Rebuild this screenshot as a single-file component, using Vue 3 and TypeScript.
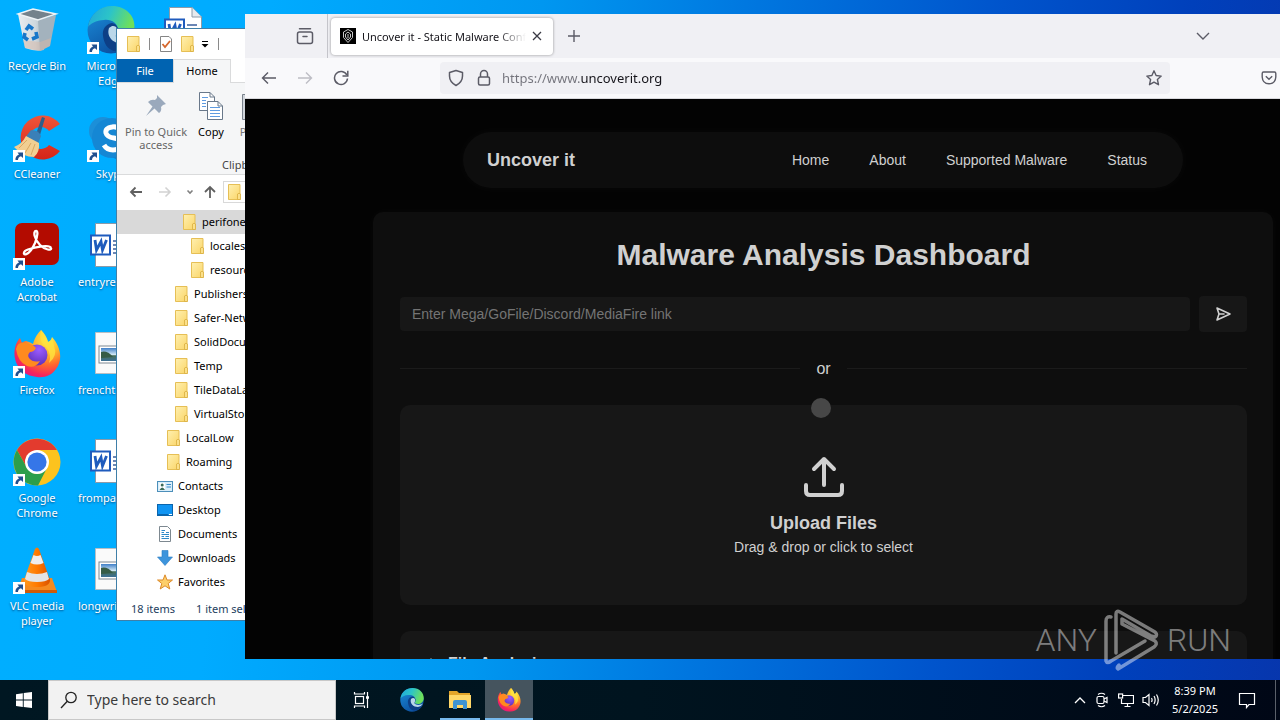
<script setup lang="ts">
import { ref } from 'vue'

interface Shortcut {
  label: string
  icon: string
  linked?: boolean
  cut?: boolean
}

interface TreeNode {
  label: string
  icon: string
  level: number
  selected?: boolean
}

const columns: Shortcut[][] = [
  [
    { label: 'Recycle Bin', icon: 'bin' },
    { label: 'CCleaner', icon: 'ccleaner', linked: true },
    { label: 'Adobe Acrobat', icon: 'acrobat', linked: true },
    { label: 'Firefox', icon: 'firefox', linked: true },
    { label: 'Google Chrome', icon: 'chrome', linked: true },
    { label: 'VLC media player', icon: 'vlc', linked: true },
  ],
  [
    { label: 'Microsoft Edge', icon: 'edge', linked: true },
    { label: 'Skype', icon: 'skype', linked: true },
    { label: 'entryre', icon: 'word', cut: true },
    { label: 'frencht', icon: 'photo', cut: true },
    { label: 'frompa', icon: 'word', cut: true },
    { label: 'longwri', icon: 'photo', cut: true },
  ],
  [{ label: '', icon: 'word' }],
]

const tree: TreeNode[] = [
  { label: 'perifone', icon: 'folder', level: 3, selected: true },
  { label: 'locales', icon: 'folder', level: 4 },
  { label: 'resources', icon: 'folder', level: 4 },
  { label: 'Publishers', icon: 'folder', level: 2 },
  { label: 'Safer-Networking', icon: 'folder', level: 2 },
  { label: 'SolidDocuments', icon: 'folder', level: 2 },
  { label: 'Temp', icon: 'folder', level: 2 },
  { label: 'TileDataLayer', icon: 'folder', level: 2 },
  { label: 'VirtualStore', icon: 'folder', level: 2 },
  { label: 'LocalLow', icon: 'folder', level: 1 },
  { label: 'Roaming', icon: 'folder', level: 1 },
  { label: 'Contacts', icon: 'contacts', level: 0 },
  { label: 'Desktop', icon: 'desktop', level: 0 },
  { label: 'Documents', icon: 'documents', level: 0 },
  { label: 'Downloads', icon: 'downloads', level: 0 },
  { label: 'Favorites', icon: 'favorites', level: 0 },
]

const links = ['Home', 'About', 'Supported Malware', 'Status']
const address = ref('https://www.uncoverit.org')
const link = ref('')
const query = ref('')
</script>

<template>
  <div class="screen">
    <svg class="sprite" width="0" height="0" aria-hidden="true">
      <defs>
        <linearGradient id="gEdgeA" x1="0" y1="0" x2="1" y2="0.3">
          <stop offset="0" stop-color="#1fa5dc" /><stop offset="0.5" stop-color="#2cc4c8" /><stop offset="1" stop-color="#6fe05a" />
        </linearGradient>
        <linearGradient id="gEdgeB" x1="0" y1="0" x2="0.6" y2="1">
          <stop offset="0" stop-color="#1b8fdc" /><stop offset="1" stop-color="#0c4f9e" />
        </linearGradient>
        <radialGradient id="gFox" cx="0.72" cy="0.2" r="0.9">
          <stop offset="0" stop-color="#fff04a" /><stop offset="0.35" stop-color="#ffb42a" /><stop offset="0.6" stop-color="#ff6a2c" /><stop offset="0.85" stop-color="#f5265c" /><stop offset="1" stop-color="#e0158a" />
        </radialGradient>
        <radialGradient id="gGlobe" cx="0.6" cy="0.25" r="0.8">
          <stop offset="0" stop-color="#9c5cff" /><stop offset="1" stop-color="#5a2fb8" />
        </radialGradient>
        <linearGradient id="gFolder" x1="0" y1="0" x2="1" y2="1">
          <stop offset="0" stop-color="#fff0b0" /><stop offset="1" stop-color="#fad568" />
        </linearGradient>
        <linearGradient id="gCone" x1="0" y1="0" x2="1" y2="0">
          <stop offset="0" stop-color="#ff9a1e" /><stop offset="0.5" stop-color="#ff7a00" /><stop offset="1" stop-color="#d95200" />
        </linearGradient>
        <linearGradient id="gCc" x1="0" y1="0" x2="0" y2="1">
          <stop offset="0" stop-color="#f0553a" /><stop offset="1" stop-color="#d42418" />
        </linearGradient>
        <linearGradient id="gBin" x1="0" y1="0" x2="1" y2="0">
          <stop offset="0" stop-color="#e9eef1" /><stop offset="0.6" stop-color="#cfd8de" /><stop offset="1" stop-color="#9fadb8" />
        </linearGradient>
        <linearGradient id="gSky" x1="0" y1="0" x2="0" y2="1">
          <stop offset="0" stop-color="#3f7fc8" /><stop offset="0.5" stop-color="#cfe6f4" /><stop offset="0.6" stop-color="#48705a" /><stop offset="1" stop-color="#3a6f96" />
        </linearGradient>
      </defs>

      <symbol id="bin" viewBox="0 0 48 48">
        <path d="M5 8 34 13 31 44Q23 46 12 42Z" fill="url(#gBin)" />
        <path d="M25 14 43 9 37 40 27 45Z" fill="#a3b2bd" />
        <path d="M5 8 20 3 43 8 25 14Z" fill="#74828c" stroke="#eef3f6" stroke-width="1.500" />
        <path d="M10 34 27 36 38 32 37 40 27 45 12 42Z" fill="#d8b8a6" opacity="0.5" />
        <g fill="none" stroke="#1877c9" stroke-width="3.600">
          <path d="M13 24 16 20 20 23" /><path d="M23 26 24 31 19 33" /><path d="M15 34 11 31 12 27" />
        </g>
      </symbol>

      <symbol id="ccleaner" viewBox="0 0 48 48">
        <path d="M47 10A22 22 0 1 0 47 37L36 31A11 11 0 1 1 36 17Z" fill="url(#gCc)" />
        <path d="M29 3 32 4 27 21 23 20Z" fill="#2d5f8b" />
        <path d="M18 16Q26 16 28 22L25 30 12 24Z" fill="#3a80b8" />
        <path d="M13 22 26 29Q27 38 21 43Q10 43 1 33Q9 30 13 22Z" fill="#f2cf92" />
        <path d="M14 26 6 34M18 29 12 39M22 30 18 41" stroke="#d9a962" stroke-width="1" />
      </symbol>

      <symbol id="acrobat" viewBox="0 0 48 48">
        <rect x="2" y="1" width="44" height="42" rx="7" fill="#b30b00" />
        <path d="M12 29C8 34 16 35 22 21C25 13 25 9 23 9C20 9 21 17 27 23C32 28 39 29 38 26C37 22 22 25 15 27.500C13 28.300 12.500 28.500 12 29Z" fill="none" stroke="#fff" stroke-width="2.300" />
      </symbol>

      <symbol id="firefox" viewBox="0 0 48 48">
        <path d="M28 0C32 4 34 9 35 12C38 11 39 9 39 7C48 17 50 30 43 39C39 45 32 48 24 47C8 46-1 32 2 18C3 13 5 10 7 8L9 13Q11 11 13 11Q17 12 20 14C22 7 25 3 28 0Z" fill="url(#gFox)" />
        <circle cx="24" cy="25" r="10.500" fill="url(#gGlobe)" />
        <path d="M3 19Q5 11 13 13Q20 14 23 18Q21 22 17 22Q14 25 16 28Q20 33 27 31Q22 39 14 36Q5 32 3 19Z" fill="#ff8a1f" />
        <path d="M28 0Q25 11 33 17Q39 24 36 33Q45 26 41 16L39 7Q38 11 35 12Q34 6 28 0Z" fill="#ffe23f" opacity="0.8" />
      </symbol>

      <symbol id="chrome" viewBox="0 0 48 48">
        <circle cx="24" cy="24" r="23.500" fill="#fcc31e" />
        <path d="M4 12A23.500 23.500 0 0 1 44 12H24V24L14 30Z" fill="#e33b2e" />
        <path d="M4 12A23.500 23.500 0 0 0 25 47.500L34 30Q24 42 14 30Z" fill="#2c9e4b" />
        <circle cx="24" cy="24" r="12" fill="#fff" /><circle cx="24" cy="24" r="9.600" fill="#3576e8" />
      </symbol>

      <symbol id="vlc" viewBox="0 0 48 48">
        <path d="M9 32H39L44 46H4Z" fill="#f58a1f" /><path d="M4 44H44L44 47H4Z" fill="#cf5b08" />
        <path d="M22 3Q24 0 26 3L37 34Q37 41 24 41Q11 41 11 34Z" fill="url(#gCone)" />
        <path d="M20.500 9Q24 11 27.500 9L30.500 17Q24 20 17.500 17Z" fill="#eeeeee" />
        <path d="M14 26Q24 30 34 26L36 33Q33 36 24 36Q15 36 12 33Z" fill="#e4e4e4" />
      </symbol>

      <symbol id="edge" viewBox="0 0 48 48">
        <circle cx="24" cy="24" r="23.500" fill="url(#gEdgeB)" />
        <path d="M1 21C3 8 13 0 25 0C39 0 48 10 47.500 21C47 30 38 34 31 31C28 30 31 28 31 24C31 17 24 13 17 14C9 14 3 18 1 21Z" fill="url(#gEdgeA)" />
        <path d="M16 30C15 23 19 18 25 17C29 18 31 21 31 24C31 28 28 29 29 31C33 35 40 35 45 33C41 42 33 46 27 45C20 43 17 37 16 30Z" fill="#0d3f86" />
        <path d="M22 22C27 17 32 22 30 27C28 30 29 31 30 32C36 35 42 34 46 31Q43 37 36 38C27 38 19 31 22 22Z" fill="#d9f2fa" opacity="0.85" />
      </symbol>

      <symbol id="skype" viewBox="0 0 48 48">
        <circle cx="16" cy="17" r="14" fill="#1c8fd8" /><circle cx="32" cy="31" r="14" fill="#0f6dbb" /><circle cx="25" cy="24" r="20" fill="#1587d4" />
        <path d="M34 17Q31 12 25 13Q18 14 19 19Q20 23 27 24Q34 25 34 30Q33 36 26 36Q20 36 17 31" fill="none" stroke="#fff" stroke-width="5" />
      </symbol>

      <symbol id="word" viewBox="0 0 48 48">
        <path d="M8.500 1.500H31L40.500 11V44.500H8.500Z" fill="#fff" stroke="#8c9aa8" />
        <path d="M31 1.500V11H40.500" fill="#e6eaee" stroke="#8c9aa8" />
        <path d="M26 19H36M26 23H36M26 27H36M26 31H36" stroke="#3b5f9d" stroke-width="1.300" />
        <rect x="3" y="12.500" width="21" height="21" fill="#1f5bbd" /><rect x="5" y="14.500" width="17" height="17" fill="#fff" />
        <path d="M8 18 9.500 28 14 19.500 15.500 28 19.500 18" fill="none" stroke="#1f5bbd" stroke-width="2.800" />
      </symbol>

      <symbol id="photo" viewBox="0 0 48 48">
        <path d="M8.500 2.500H40.500V43.500H8.500Z" fill="#fafafa" stroke="#b8bec4" />
        <rect x="12" y="16" width="25" height="17" fill="#fff" stroke="#7c8791" /><rect x="14" y="18" width="21" height="13" fill="url(#gSky)" />
        <path d="M14 22Q20 20 26 27L14 28Z" fill="#365c46" />
      </symbol>

      <symbol id="arrow" viewBox="0 0 12 12">
        <rect width="12" height="12" fill="#fff" /><path d="M2.500 10Q2 6 6 4.500L4.500 2.500H10V8L8 6.200Q5 7 5 10Z" fill="#21508f" />
      </symbol>

      <symbol id="folder" viewBox="0 0 16 16">
        <path d="M2.500 0.500H14V15.500H2.500Z" fill="url(#gFolder)" stroke="#e6bf55" />
        <path d="M11.500 15.500V10Q13 8.500 14.500 10V15.500Z" fill="#fbe08a" stroke="#d9ae3f" stroke-width="0.800" />
      </symbol>
      <symbol id="contacts" viewBox="0 0 16 16">
        <rect x="0.500" y="3.500" width="15" height="10" fill="#d9eefa" stroke="#4c8fba" />
        <rect x="2.500" y="5" width="5.500" height="7" fill="#fff" /><circle cx="5.200" cy="7" r="1.500" fill="#3c6b58" /><path d="M2.500 12Q5.200 7 8 12Z" fill="#3c6b58" />
        <path d="M9.500 6.500H14M9.500 9H14" stroke="#3a8ac7" />
      </symbol>
      <symbol id="desktop" viewBox="0 0 16 16">
        <rect x="0.500" y="2.500" width="15" height="11" fill="#1094f2" stroke="#0a65ad" /><path d="M1 12.500H11" stroke="#0a65ad" /><path d="M12 12.500H15" stroke="#fff" />
      </symbol>
      <symbol id="documents" viewBox="0 0 16 16">
        <path d="M2.500 0.500H10.500L13.500 3.500V15.500H2.500Z" fill="#fff" stroke="#7d8890" />
        <path d="M4.500 4.500H8M9 6.500H12M4.500 8.500H12M4.500 10.500H7M8.500 10.500H12M4.500 12.500H12M4.500 6.500H7" stroke="#2e8bc9" />
      </symbol>
      <symbol id="downloads" viewBox="0 0 16 16">
        <path d="M5 0.500H11V7H15.500L8 15.500 0.500 7H5Z" fill="#3d94dc" stroke="#2a7cc2" stroke-width="0.600" />
      </symbol>
      <symbol id="favorites" viewBox="0 0 16 16">
        <path d="M8 0.800 10 6H15.500L11.200 9.500 12.800 15 8 11.800 3.200 15 4.800 9.500 0.500 6H6Z" fill="#fdcf6a" stroke="#dc8a2a" />
      </symbol>
    </svg>

    <main class="desktop">
      <div class="shortcuts">
        <div v-for="(column, c) in columns" :key="c" class="column">
          <div v-for="item in column" :key="item.icon + item.label" class="shortcut">
            <div class="picture">
              <svg width="48" height="48" aria-hidden="true"><use :href="'#' + item.icon" /></svg>
              <svg v-if="item.linked" class="badge" width="12" height="12" aria-hidden="true"><use href="#arrow" /></svg>
            </div>
            <span class="caption" :class="{ cut: item.cut }">{{ item.label }}</span>
          </div>
        </div>
      </div>

      <section class="explorer" aria-label="File Explorer">
        <div class="quick">
          <svg width="16" height="16"><use href="#folder" /></svg>
          <i class="bar"></i>
          <svg width="16" height="16" viewBox="0 0 16 16"><path d="M2.500 0.500H11L13.500 3V15.500H2.500Z" fill="#fff" stroke="#858585" /><path d="M4.500 8 7 11 12 5" fill="none" stroke="#d5672d" stroke-width="1.800" /></svg>
          <svg width="16" height="16"><use href="#folder" /></svg>
          <svg class="more" width="8" height="8" viewBox="0 0 8 8"><path d="M1 1.500H7" stroke="#000" /><path d="M0.500 4H7.500L4 7.500Z" /></svg>
          <i class="bar"></i>
        </div>
        <div class="tabs">
          <button class="file">File</button>
          <button class="home">Home</button>
        </div>
        <div class="ribbon">
          <div class="tools">
            <button class="tool pin">
              <svg width="28" height="30" viewBox="0 0 28 30"><path d="M15 4 24 13 21 14 19 16Q20 20 17 22L12.500 17.500 4 25 10.500 15.500 6 11Q9 8 13 9L15 7Z" fill="#9aa9bc" /></svg>
              <span>Pin to Quick access</span>
            </button>
            <button class="tool copy">
              <svg width="28" height="30" viewBox="0 0 28 30"><g fill="#fff" stroke="#69788a"><path d="M2.500 1.500H13L17.500 6V19.500H2.500Z" /><path d="M10.500 10.500H21L25.500 15V28.500H10.500Z" /></g><path d="M21 10.500V15H25.500M13 1.500V6H17.500" fill="none" stroke="#69788a" /><path d="M5 6.500H11M5 9.500H9M5 12.500H9M5 15.500H9M13 16.500H23M13 19.500H23M13 22.500H23M13 25.500H23" stroke="#5f9be0" /></svg>
              <span>Copy</span>
            </button>
            <button class="tool paste">
              <svg width="28" height="30" viewBox="0 0 28 30"><path d="M2.500 3.500H23.500V28.500H2.500Z" fill="#d0d5db" stroke="#7a828c" /></svg>
              <span>Paste</span>
            </button>
          </div>
          <span class="group">Clipboard</span>
        </div>
        <div class="crumbs">
          <svg width="16" height="16" viewBox="0 0 16 16"><path d="M14 8H3M7.500 3.500 3 8 7.500 12.500" fill="none" stroke="#606060" stroke-width="1.800" /></svg>
          <svg width="16" height="16" viewBox="0 0 16 16"><path d="M2 8H13M8.500 3.500 13 8 8.500 12.500" fill="none" stroke="#d2d2d2" stroke-width="1.600" /></svg>
          <svg width="8" height="8" viewBox="0 0 8 8"><path d="M1.500 2.500 4 5 6.500 2.500" fill="none" stroke="#808080" stroke-width="1.600" /></svg>
          <svg width="16" height="16" viewBox="0 0 16 16"><path d="M8 14V3M3 8 8 3 13 8" fill="none" stroke="#606060" stroke-width="1.800" /></svg>
          <div class="path"><svg width="16" height="16"><use href="#folder" /></svg></div>
        </div>
        <ul class="tree">
          <li v-for="node in tree" :key="node.label" :class="{ selected: node.selected }" :style="{ paddingLeft: 40 + node.level * 8 + 'px' }">
            <svg width="16" height="16" aria-hidden="true"><use :href="'#' + node.icon" /></svg>
            <span>{{ node.label }}</span>
          </li>
        </ul>
        <footer class="status"><span>18 items</span><span>1 item selected</span></footer>
      </section>

      <section class="browser" aria-label="Firefox">
        <div class="tabstrip">
          <button class="bare view" aria-label="Firefox View">
            <svg width="18" height="18" viewBox="0 0 18 18" fill="none" stroke="#5b5b66" stroke-width="1.500" stroke-linecap="round"><rect x="1.500" y="5" width="15" height="11.500" rx="2" /><path d="M3.500 1.800H14.500M7 9.500H11" /></svg>
          </button>
          <div class="tab">
            <svg width="16" height="16" viewBox="0 0 16 16"><rect width="16" height="16" /><g fill="none" stroke="#c8c8c8"><path d="M8 1.500 12.500 4V9.500L8 14.500 3.500 9.500V4Z" /><path d="M8 4 10.500 6V9L8 12 5.500 9V6ZM8 6V10" /></g></svg>
            <span class="title">Uncover it - Static Malware Configuration</span>
            <button class="bare" aria-label="Close tab"><svg width="10" height="10" viewBox="0 0 10 10"><path d="M1 1 9 9M9 1 1 9" stroke="#3a3a44" stroke-width="1.300" /></svg></button>
          </div>
          <button class="bare plus" aria-label="New tab"><svg width="14" height="14" viewBox="0 0 14 14"><path d="M7 1V13M1 7H13" stroke="#5b5b66" stroke-width="1.400" /></svg></button>
          <button class="bare list" aria-label="List all tabs"><svg width="14" height="14" viewBox="0 0 14 14"><path d="M1 4 7 10 13 4" fill="none" stroke="#5b5b66" stroke-width="1.400" /></svg></button>
        </div>
        <div class="toolbar">
          <button class="bare" aria-label="Back"><svg width="16" height="16" viewBox="0 0 16 16"><path d="M15 8H1.500M7 2.500 1.500 8 7 13.500" fill="none" stroke="#5b5b66" stroke-width="1.400" /></svg></button>
          <button class="bare" aria-label="Forward"><svg width="16" height="16" viewBox="0 0 16 16"><path d="M1 8H14.500M9 2.500 14.500 8 9 13.500" fill="none" stroke="#bdbdc4" stroke-width="1.400" /></svg></button>
          <button class="bare" aria-label="Reload"><svg width="16" height="16" viewBox="0 0 16 16"><path d="M13.800 5A6.500 6.500 0 1 0 14.500 8.500" fill="none" stroke="#5b5b66" stroke-width="1.500" /><path d="M9.500 6H14.800V0.800" fill="none" stroke="#5b5b66" stroke-width="1.500" /></svg></button>
          <div class="urlbar">
            <svg width="16" height="18" viewBox="0 0 16 18"><path d="M8 1.500 14.500 3.500V7Q14.500 13 8 16.500Q1.500 13 1.500 7V3.500Z" fill="none" stroke="#5b5b66" stroke-width="1.500" stroke-linejoin="round" /></svg>
            <svg width="16" height="18" viewBox="0 0 16 18"><rect x="2.500" y="8" width="11" height="8" rx="1.500" fill="none" stroke="#5b5b66" stroke-width="1.500" /><path d="M4.500 8V5A3.500 3.500 0 0 1 11.500 5V8" fill="none" stroke="#5b5b66" stroke-width="1.500" /></svg>
            <input v-model="address" class="address" type="text" aria-label="Address" />
            <button class="bare" aria-label="Bookmark"><svg width="18" height="18" viewBox="0 0 18 18"><path d="M9 1.800 11.100 6.500 16.200 7.100 12.400 10.500 13.500 15.700 9 13.100 4.500 15.700 5.600 10.500 1.800 7.100 6.900 6.500Z" fill="none" stroke="#5b5b66" stroke-width="1.400" stroke-linejoin="round" /></svg></button>
          </div>
          <button class="bare pocket" aria-label="Pocket"><svg width="16" height="16" viewBox="0 0 16 16" fill="none" stroke="#5b5b66" stroke-width="1.400"><path d="M2.500 2H13.500Q14.800 2 14.800 3.500V7Q14.500 13.500 8 13.800Q1.500 13.500 1.200 7V3.500Q1.200 2 2.500 2Z" /><path d="M4.800 6.200 8 9.200 11.200 6.200" /></svg></button>
        </div>

        <div class="page">
          <nav class="pill">
            <strong class="brand">Uncover it</strong>
            <a v-for="name in links" :key="name" href="#">{{ name }}</a>
          </nav>
          <div class="card">
            <h1>Malware Analysis Dashboard</h1>
            <form class="fetch" @submit.prevent>
              <input v-model="link" type="text" aria-label="Link" placeholder="Enter Mega/GoFile/Discord/MediaFire link" />
              <button aria-label="Send"><svg width="18" height="18" viewBox="0 0 18 18"><path d="M3 3 16 9 3 15 5 9ZM5 9H10" fill="none" stroke="#d0d0d0" stroke-width="1.600" stroke-linejoin="round" stroke-linecap="round" /></svg></button>
            </form>
            <div class="divider"><span>or</span></div>
            <button class="drop">
              <svg width="48" height="48" viewBox="0 0 48 48" fill="none" stroke="#d0d0d0" stroke-width="4" stroke-linecap="round" stroke-linejoin="round"><path d="M24 32V6M14 16 24 6 34 16M6 32V38Q6 42 10 42H38Q42 42 42 38V32" /></svg>
              <strong>Upload Files</strong>
              <span>Drag &amp; drop or click to select</span>
            </button>
            <section class="result">
              <svg width="12" height="12" viewBox="0 0 12 12"><path d="M6 1V11M1 6 6 1 11 6" fill="none" stroke="#888" stroke-width="1.500" /></svg>
              <h2>File Analysis</h2>
            </section>
          </div>
          <i class="pointer"></i>
        </div>
      </section>
    </main>

    <footer class="taskbar">
      <button class="start" aria-label="Start"><svg width="16" height="16" viewBox="0 0 16 16" fill="#fff"><path d="M0 2.200 6.800 1.200V7.600H0ZM7.700 1.100 16 0V7.600H7.700ZM0 8.500H6.800V14.900L0 13.900ZM7.700 8.500H16V16L7.700 15Z" /></svg></button>
      <label class="search">
        <svg width="18" height="18" viewBox="0 0 18 18"><circle cx="11" cy="6.500" r="5.200" fill="none" stroke="#222" stroke-width="1.300" /><path d="M7.300 10.200 1 17" stroke="#222" stroke-width="1.300" /></svg>
        <input v-model="query" type="text" aria-label="Search" placeholder="Type here to search" />
      </label>
      <button class="app" aria-label="Task View"><svg width="18" height="18" viewBox="0 0 18 18" fill="none" stroke="#fff" stroke-width="1.200"><rect x="2.500" y="5.500" width="8" height="7" /><path d="M1.500 1V3H11.500V1M1.500 17V15H11.500V17M14.500 1V17" /><path d="M13 6.500H16" stroke-width="2.500" /></svg></button>
      <button class="app" aria-label="Edge"><svg width="24" height="24"><use href="#edge" /></svg></button>
      <button class="app open" aria-label="File Explorer"><svg width="24" height="24" viewBox="0 0 24 24"><path d="M1 3H9L11 5H22V20H1Z" fill="#e3a52a" /><path d="M1 7H23V20H1Z" fill="#ffd768" /><path d="M5 21V14Q5 12 7 12H17Q19 12 19 14V21H15V17H9V21Z" fill="#3d93d2" /></svg></button>
      <button class="app active" aria-label="Firefox"><svg width="24" height="24"><use href="#firefox" /></svg></button>
      <div class="tray">
        <svg width="12" height="16" viewBox="0 0 12 16"><path d="M1 11 6 6 11 11" fill="none" stroke="#fff" stroke-width="1.300" /></svg>
        <svg width="16" height="16" viewBox="0 0 16 16" fill="none" stroke="#fff" stroke-width="1.200"><rect x="3" y="4.500" width="7" height="7" rx="1.500" /><path d="M10 7 13 5.500V10.500L10 9M4 2.500Q7.500 0 11 2.500M4 13.500Q7.500 16 11 13.500" /></svg>
        <svg width="16" height="16" viewBox="0 0 16 16" fill="none" stroke="#fff" stroke-width="1.200"><path d="M5 3.500H15.500V11.500H3.500V7M9.500 11.500V14.500M6.500 14.500H12.500" /><rect x="0.600" y="2" width="4" height="4" /></svg>
        <svg width="18" height="16" viewBox="0 0 18 16" fill="none" stroke="#fff" stroke-width="1.200"><path d="M1 5.500H3.500L7 2.500V13.500L3.500 10.500H1ZM9.500 6Q10.700 8 9.500 10M12 4Q14.300 8 12 12M14.500 2.500Q18 8 14.500 13.500" /></svg>
        <div class="clock"><span>8:39 PM</span><span>5/2/2025</span></div>
        <svg class="note" width="18" height="18" viewBox="0 0 18 18"><path d="M1.500 2.500H16.500V13.500H11L8.500 16.500V13.500H1.500Z" fill="none" stroke="#fff" stroke-width="1.200" /></svg>
        <i class="peek"></i>
      </div>
    </footer>

    <div class="watermark" aria-hidden="true">
      <span>ANY</span>
      <svg width="56" height="62" viewBox="0 0 56 62" fill="none" stroke="currentColor" stroke-width="3.500" stroke-linejoin="round" stroke-linecap="round"><path d="M7 8Q2 7 2 12V52Q3 55 7 52L41 32" /><path d="M12 44V5Q12 1 16 3L51 23Q54 26 51 28L47 27 18 10V15M18 15 51 32Q54 35 50 38L14 60Q12 59 15 56" /></svg>
      <span>RUN</span>
    </div>
  </div>
</template>

<style>
body {
  margin: 0;
  overflow: hidden;
}
</style>

<style scoped>
* {
  box-sizing: border-box;
}
.screen {
  position: relative;
  display: flex;
  flex-direction: column;
  height: 100vh;
  overflow: hidden;
  font-family: "Noto Sans", "Open Sans", sans-serif;
  font-size: 11px;
  line-height: 15px;
  background: linear-gradient(96deg, #00afff 0%, #00abff 20%, #0097f0 40%, #0076df 56%, #0054cc 74%, #0040bb 88%, #0736ad 100%);
}
.sprite {
  position: absolute;
}
svg {
  flex: none;
  display: block;
}
button {
  border: 0;
  padding: 0;
  background: none;
  font: inherit;
  color: inherit;
}
input {
  border: 0;
  outline: 0;
  padding: 0;
  min-width: 0;
  background: none;
  font: inherit;
}
.desktop {
  position: relative;
  flex: 1;
  min-height: 0;
  overflow: hidden;
}
.shortcuts {
  display: flex;
  padding-top: 6px;
}
.column {
  width: 74px;
}
.shortcut {
  display: flex;
  flex-direction: column;
  align-items: center;
  gap: 4px;
  height: 108px;
  color: #fff;
}
.picture {
  position: relative;
}
.badge {
  position: absolute;
  left: 0;
  bottom: 0;
}
.caption {
  width: 62px;
  text-align: center;
  text-shadow: 0 1px 2px rgba(0, 40, 90, 0.7);
}
.caption.cut {
  width: 66px;
  text-align: left;
}

.explorer {
  position: absolute;
  left: 116px;
  top: 28px;
  width: 720px;
  display: flex;
  flex-direction: column;
  background: #fff;
  border: 1px solid #3f7fa8;
  color: #000;
}
.quick {
  display: flex;
  align-items: center;
  gap: 5px;
  height: 30px;
  padding-left: 8px;
}
.bar {
  width: 1px;
  height: 12px;
  margin: 0 3px;
  background: #8a8a8a;
}
.more {
  margin: 0 1px;
}
.tabs {
  display: flex;
  height: 24px;
  border-bottom: 1px solid #dadbdc;
}
.file {
  width: 56px;
  background: #0063b1;
  color: #fff;
}
.home {
  width: 58px;
  height: 24px;
  padding-bottom: 2px;
  background: #f5f6f7;
  border: 1px solid #dadbdc;
  border-bottom: 0;
}
.ribbon {
  height: 92px;
  padding: 8px 0 0 4px;
  background: #f5f6f7;
  border-bottom: 1px solid #dadbdc;
}
.tools {
  display: flex;
  height: 66px;
}
.tool {
  display: flex;
  flex-direction: column;
  align-items: center;
  gap: 4px;
  line-height: 13px;
}
.pin {
  width: 70px;
  color: #666;
}
.copy {
  width: 40px;
}
.paste {
  width: 40px;
  margin-left: 3px;
  color: #777;
}
.group {
  display: block;
  padding-left: 101px;
  color: #444;
}
.crumbs {
  display: flex;
  align-items: center;
  gap: 13px;
  height: 35px;
  padding: 0 0 2px 11px;
}
.crumbs svg:nth-child(4) {
  margin-left: -5px;
}
.path {
  flex: 1;
  height: 22px;
  margin-left: -8px;
  padding: 2px;
  border: 1px solid #d9d9d9;
}
.tree {
  margin: 0;
  padding: 0;
  list-style: none;
}
.tree li {
  display: flex;
  align-items: center;
  gap: 5px;
  height: 24px;
}
.tree span {
  padding-bottom: 2px;
}
.tree .selected {
  background: #d9d9d9;
}
.status {
  display: flex;
  gap: 21px;
  padding: 7px 14px 4px;
  color: #24405e;
}

.browser {
  position: absolute;
  left: 245px;
  top: 14px;
  right: -121px;
  bottom: 21px;
  display: flex;
  flex-direction: column;
  overflow: hidden;
  background: #030303;
}
.bare {
  display: flex;
  align-items: center;
  justify-content: center;
}
.tabstrip {
  display: flex;
  align-items: center;
  height: 44px;
  background: #f0f0f4;
}
.view {
  width: 83px;
  height: 44px;
  padding-left: 37px;
  border-right: 1px solid #c4c4ca;
}
.tab {
  display: flex;
  align-items: center;
  gap: 6px;
  width: 222px;
  height: 37px;
  margin-left: 3px;
  padding: 0 11px 0 9px;
  border-radius: 4px;
  background: #fff;
  box-shadow: 0 0 3px rgba(0, 0, 0, 0.4);
}
.title {
  flex: 1;
  overflow: hidden;
  white-space: nowrap;
  color: #15141a;
  mask-image: linear-gradient(90deg, #000 82%, transparent 100%);
}
.plus {
  margin-left: 14px;
}
.list {
  margin-left: auto;
  margin-right: 191px;
}
.toolbar {
  display: flex;
  align-items: center;
  gap: 20px;
  height: 41px;
  padding-left: 16px;
  background: #f9f9fb;
  border-bottom: 1px solid #d8d8dc;
}
.urlbar {
  flex: 1;
  display: flex;
  align-items: center;
  gap: 12px;
  height: 32px;
  margin-left: 71px;
  padding: 0 7px 0 8px;
  border-radius: 4px;
  background: #f0f0f4;
}
.address {
  flex: 1;
  margin-left: -2px;
  font-size: 13px;
  line-height: 20px;
  color: transparent;
  background: linear-gradient(90deg, #73737b 78px, #15141a 78px);
  background-clip: text;
}
.pocket {
  margin: 0 124px 0 71px;
}
.page {
  position: relative;
  flex: 1;
  min-height: 0;
  padding: 33px 0 0;
  overflow: hidden;
  font-family: "Liberation Sans", Arial, sans-serif;
  color: #d0d0d0;
}
.pill {
  display: flex;
  align-items: center;
  gap: 40px;
  max-width: 720px;
  height: 56px;
  margin: 0 auto 24px;
  padding: 0 36px 0 24px;
  border-radius: 28px;
  background: #0d0d0d;
  box-shadow: 0 0 12px rgba(255, 255, 255, 0.03);
  font-size: 14px;
}
.brand {
  flex: 1;
  font-size: 18px;
}
.pill a {
  color: #d0d0d0;
  text-decoration: none;
}
.card {
  max-width: 900px;
  margin: 0 auto;
  padding: 24px 26px 24px 27px;
  border-radius: 10px;
  background: #0e0e0e;
  box-shadow: 0 0 10px rgba(255, 255, 255, 0.03);
}
h1 {
  margin: 0 0 23px;
  font-size: 30px;
  line-height: 37px;
  text-align: center;
  color: #d0d0d0;
}
.fetch {
  display: flex;
  align-items: center;
  gap: 9px;
}
.fetch input {
  flex: 1;
  height: 34px;
  padding: 0 12px;
  border-radius: 4px;
  background: #171717;
  color: #d0d0d0;
  font-size: 14px;
}
.fetch input::placeholder {
  color: #747474;
}
.fetch button {
  display: flex;
  align-items: center;
  justify-content: center;
  width: 48px;
  height: 36px;
  border-radius: 4px;
  background: #171717;
}
.divider {
  display: flex;
  align-items: center;
  gap: 16px;
  margin: 26px 0;
  font-size: 16px;
  line-height: 21px;
}
.divider::before,
.divider::after {
  content: "";
  flex: 1;
  height: 1px;
  background: #1b1b1b;
}
.drop {
  display: flex;
  flex-direction: column;
  align-items: center;
  justify-content: center;
  width: 100%;
  height: 200px;
  padding-top: 2px;
  border-radius: 10px;
  background: #171717;
  font-size: 14px;
  line-height: 24px;
}
.drop strong {
  margin-top: 10px;
  font-size: 18px;
}
.result {
  display: flex;
  align-items: center;
  gap: 11px;
  margin-top: 26px;
  padding: 24px 25px;
  border-radius: 10px;
  background: #171717;
}
.result h2 {
  margin: 0;
  font-size: 16px;
  line-height: 18px;
}
.pointer {
  position: absolute;
  left: calc(50% - 12px);
  top: 299px;
  width: 20px;
  height: 20px;
  border-radius: 50%;
  background: #474747;
}

.taskbar {
  display: flex;
  height: 40px;
  background: linear-gradient(90deg, #001722, #00141f 50%, #000716);
  color: #fff;
}
.start {
  display: flex;
  align-items: center;
  justify-content: center;
  width: 48px;
}
.search {
  display: flex;
  align-items: center;
  gap: 9px;
  width: 288px;
  padding: 0 11px;
  border: 1px solid #c8c8c8;
  background: #f2f2f2;
}
.search input {
  flex: 1;
  font-size: 14px;
  line-height: 22px;
  color: #333;
}
.search input::placeholder {
  color: #3a3a3a;
}
.app {
  display: flex;
  align-items: center;
  justify-content: center;
  width: 48px;
  margin-left: 2px;
}
.open {
  width: 40px;
  margin-left: 4px;
  box-shadow: inset 0 -2px #76b9ed;
}
.active {
  margin-left: 5px;
  background: #45545e;
  box-shadow: inset 0 -2px #76b9ed;
}
.tray {
  display: flex;
  align-items: center;
  gap: 8px;
  margin-left: auto;
}
.clock {
  display: flex;
  flex-direction: column;
  align-items: center;
  width: 54px;
  line-height: 18px;
}
.note {
  margin: 0 11px 0 8px;
}
.peek {
  width: 5px;
  align-self: stretch;
  border-left: 1px solid #5a606a;
}
.watermark {
  position: absolute;
  right: 49px;
  bottom: 49px;
  display: flex;
  align-items: center;
  gap: 7px;
  color: rgba(255, 255, 255, 0.45);
  font-family: Roboto, "Liberation Sans", sans-serif;
  font-size: 32px;
  font-weight: 300;
  line-height: 62px;
}
</style>
